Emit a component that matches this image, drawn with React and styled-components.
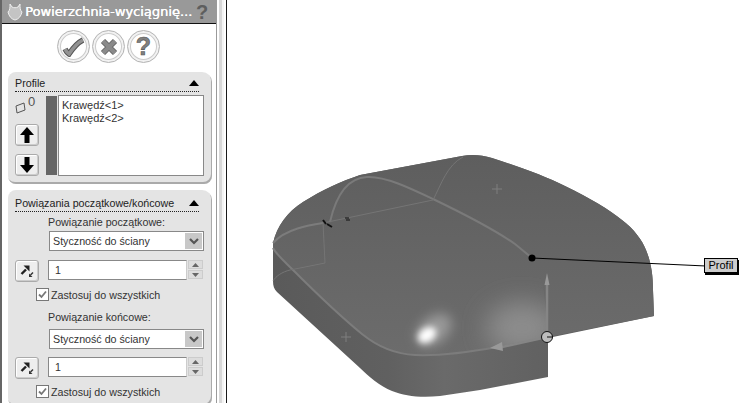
import styled, { createGlobalStyle } from "styled-components";

const GlobalStyle = createGlobalStyle`
  html, body {
    margin: 0;
    background: #fff;
  }
`;

const BODY =
  "M273 243 C277 226 287 212 303 202 C322 190 342 181 360 175 L462 156 C472 154 482 155 492 158 C520 167 545 176 565 186 C590 198 610 210 622 220 C634 229 642 240 646 250 C651 262 653 275 653 290 L654 316 L548 338 L548 377 L480 390 L440 396 C420 398 405 396 392 391 C380 386 368 376 360 368 L277 292 C274 289 273 286 273 281 Z";
const DOME =
  "M273 243 C277 226 287 212 303 202 C322 190 342 181 360 175 L462 156 C472 154 482 155 492 158 C520 167 545 176 565 186 C590 198 610 210 622 220 C634 229 642 240 646 250 C651 262 653 275 653 290 L654 316 L548 337 L497 347 C470 352 440 356 415 355 C395 354 378 347 362 334 C340 316 315 292 292 269 C284 261 276 254 273 248 Z";
// corner patch of the dome, left of the edge that runs down to the triad
const CORNER =
  "M273 243 L532 258 C540 270 546 285 547 337 L497 347 C470 352 440 356 415 355 C395 354 378 347 362 334 C340 316 315 292 292 269 Z";

const Part = ({ title, children, ...rest }) => (
  <Group {...rest}>
    <GroupHead>
      <span>{title}</span>
      <Collapse />
    </GroupHead>
    {children}
  </Group>
);

const LinkBlock = ({ label, $second }) => (
  <>
    <FieldLabel $second={$second}>{label}</FieldLabel>
    <SelectBox $second={$second}>
      <span>Styczność do ściany</span>
      <SelectArrow>
        <svg width="10" height="7" viewBox="0 0 10 7">
          <path d="M1 1 L5 5 L9 1" fill="none" stroke="#555" strokeWidth="2.2" />
        </svg>
      </SelectArrow>
    </SelectBox>
    <ValueRow $second={$second}>
      <ToolButton>
        <svg width="16" height="16" viewBox="0 0 16 16">
          <path d="M2.5 11 L7 6.5" fill="none" stroke="#222" strokeWidth="2.4" />
          <path d="M4.5 2.5 H10.5 V8.5 Z" fill="#222" />
          <path d="M14 9.5 L11.5 12" fill="none" stroke="#333" strokeWidth="1.4" />
          <path d="M10 10.5 V14 H13.5 Z" fill="#333" />
        </svg>
      </ToolButton>
      <ValueInput>1</ValueInput>
      <Spin>
        <SpinPart>
          <svg width="7" height="4" viewBox="0 0 7 4"><path d="M0 4 L3.5 0 L7 4 Z" fill="#666" /></svg>
        </SpinPart>
        <SpinPart>
          <svg width="7" height="4" viewBox="0 0 7 4"><path d="M0 0 L3.5 4 L7 0 Z" fill="#666" /></svg>
        </SpinPart>
      </Spin>
    </ValueRow>
    <CheckRow>
      <CheckBox>
        <svg width="11" height="11" viewBox="0 0 11 11">
          <path d="M2 5.5 L4.5 8 L9 2.5" fill="none" stroke="#777" strokeWidth="1.8" />
        </svg>
      </CheckBox>
      Zastosuj do wszystkich
    </CheckRow>
  </>
);

const Model = () => (
  <svg width="520" height="403" viewBox="227 0 520 403">
    <defs>
      <linearGradient id="side" x1="0" x2="1" y1="0" y2="0">
        <stop offset="0" stopColor="#5a5a5a" />
        <stop offset="0.3" stopColor="#606060" />
        <stop offset="0.45" stopColor="#6a6a6a" />
        <stop offset="0.75" stopColor="#606060" />
        <stop offset="1" stopColor="#5c5c5c" />
      </linearGradient>
      <linearGradient id="dome" x1="0" x2="0" y1="0" y2="1">
        <stop offset="0" stopColor="#5e5e5e" />
        <stop offset="0.55" stopColor="#666" />
        <stop offset="1" stopColor="#6c6c6c" />
      </linearGradient>
      <filter id="blur8" x="-100%" y="-100%" width="300%" height="300%"><feGaussianBlur stdDeviation="6" /></filter>
      <filter id="blur3" x="-100%" y="-100%" width="300%" height="300%"><feGaussianBlur stdDeviation="3" /></filter>
      <filter id="blur14" x="-100%" y="-100%" width="300%" height="300%"><feGaussianBlur stdDeviation="12" /></filter>
      <clipPath id="cornerClip"><path d={CORNER} /></clipPath>
    </defs>

    <path d={BODY} fill="url(#side)" />
    <path d={DOME} fill="url(#dome)" />

    <g clipPath="url(#cornerClip)">
      <ellipse cx="522" cy="328" rx="36" ry="26" fill="#8c8c8c" filter="url(#blur14)" />
      <ellipse cx="434" cy="330" rx="20" ry="13" transform="rotate(-40 434 330)" fill="#9a9a9a" filter="url(#blur8)" />
      <ellipse cx="427" cy="335" rx="10" ry="7" transform="rotate(-35 427 335)" fill="#fff" filter="url(#blur3)" />
    </g>

    <path
      d="M273 248 C276 254 284 261 292 269 C315 292 340 316 362 334 C378 347 395 354 415 355 C440 356 470 352 497 347"
      fill="none"
      stroke="#7c7c7c"
      strokeWidth="2"
    />
    <path
      d="M330 222 C335 200 345 178 367 177 C385 176 410 188 433 199 C460 212 495 230 515 244 L532 258"
      fill="none"
      stroke="#7a7a7a"
      strokeWidth="2"
    />
    <path d="M273 243 C285 229 310 225 323 223" fill="none" stroke="#7c7c7c" strokeWidth="2" />
    <path
      d="M323 223 L433 200 C441 185 447 165 463 157 M323 223 L325 263 L290 270 C282 272 276 276 273 281"
      fill="none"
      stroke="#757575"
      strokeWidth="1"
    />

    <g stroke="#7e7e7e" strokeWidth="1" fill="none">
      <path d="M492 189 H502 M497 184 V194" />
      <path d="M341 337 H351 M346 332 V342" />
    </g>

    <path d="M323 220 L326 224 M327 224 L332 227" stroke="#111" strokeWidth="2" fill="none" />
    <path d="M345 218 H349 M346 220 H350" stroke="#111" strokeWidth="1" fill="none" />

    <path d="M547 337 V284" stroke="#858585" strokeWidth="2.5" />
    <path d="M544.5 285 L547 273 L549.5 285 Z" fill="#999" />
    <path d="M547 337 L502 347" stroke="#858585" strokeWidth="2.5" />
    <path d="M502 342 L490 348 L503 351 Z" fill="#999" />
    <circle cx="547" cy="337" r="5.5" fill="#bdbdbd" stroke="#111" strokeWidth="1" />
    <path d="M547 337 H553" stroke="#111" strokeWidth="1" />

    <path d="M532 258 L706 266" stroke="#000" strokeWidth="1.2" />
    <circle cx="532" cy="258" r="3.5" fill="#000" />
  </svg>
);

export default function App() {
  return (
    <Screen>
      <GlobalStyle />
      <Sidebar>
        <Panel>
          <TitleBar>
            <svg width="16" height="18" viewBox="0 0 16 18">
              <path
                d="M3 1 L5 4 C7 5 9 5 11 4 L13 1 C13 5 13 7 15 9 C14 13 12 16 8 17 C4 16 2 13 1 9 C3 7 3 5 3 1 Z"
                fill="#c4c4c4"
                stroke="#eee"
                strokeWidth="1"
              />
            </svg>
            <TitleText>Powierzchnia-wyciągnię...</TitleText>
            <TitleHelp>?</TitleHelp>
          </TitleBar>

          <ActionRow>
            <RoundButton>
              <svg width="24" height="20" viewBox="0 0 24 20">
                <path d="M3 12 C4 14 5 16 7 17 C11 11 15 6 21 3" fill="none" stroke="#555" strokeWidth="5.5" />
                <path d="M3 12 C4 14 5 16 7 17 C11 11 15 6 21 3" fill="none" stroke="#929292" strokeWidth="3.5" />
              </svg>
            </RoundButton>
            <RoundButton>
              <svg width="20" height="20" viewBox="0 0 20 20">
                <path d="M4 4 L16 16 M16 4 L4 16" fill="none" stroke="#666" strokeWidth="6" />
                <path d="M4 4 L16 16 M16 4 L4 16" fill="none" stroke="#8a8a8a" strokeWidth="4" />
              </svg>
            </RoundButton>
            <RoundButton>?</RoundButton>
          </ActionRow>

          <Part title="Profile">
            <ProfileBody>
              <ProfileTools>
                <SelectionMark>
                  <svg width="11" height="12" viewBox="0 0 11 12">
                    <path d="M1 4 L9 1 L10 8 L2 11 Z" fill="none" stroke="#555" strokeWidth="1" />
                  </svg>
                  <Count>0</Count>
                </SelectionMark>
                <ToolButton>
                  <svg width="14" height="16" viewBox="0 0 14 16">
                    <path d="M7 0 L14 8 H9.5 V16 H4.5 V8 H0 Z" fill="#000" />
                  </svg>
                </ToolButton>
                <ToolButton $stacked>
                  <svg width="14" height="16" viewBox="0 0 14 16">
                    <path d="M7 16 L14 8 H9.5 V0 H4.5 V8 H0 Z" fill="#000" />
                  </svg>
                </ToolButton>
              </ProfileTools>
              <ColorBar />
              <ListBox>
                <div>Krawędź&lt;1&gt;</div>
                <div>Krawędź&lt;2&gt;</div>
              </ListBox>
            </ProfileBody>
          </Part>

          <Part title="Powiązania początkowe/końcowe" $spaced>
            <LinkBlock label="Powiązanie początkowe:" />
            <LinkBlock label="Powiązanie końcowe:" $second />
          </Part>
        </Panel>
        <Splitter />
      </Sidebar>

      <Viewport>
        <Model />
        <Callout>Profil</Callout>
      </Viewport>
    </Screen>
  );
}

const Screen = styled.div`
  display: flex;
  width: 747px;
  height: 403px;
  overflow: hidden;
  background: #fff;
  font-family: "Liberation Sans", Arial, sans-serif;
  font-size: 10.7px;
  color: #222;
`;

const Sidebar = styled.div`
  display: flex;
  flex: none;
  width: 227px;
  height: 403px;
  box-sizing: border-box;
  border-left: 2px solid #666;
  border-right: 1px solid #1a1a1a;
`;

const Panel = styled.div`
  width: 214px;
  flex: none;
  background: #fff;
`;

const Splitter = styled.div`
  flex: 1;
  background: linear-gradient(
    to right,
    #9a9a9a 0 1px,
    #fff 1px 3px,
    #d8d8d8 3px 6px,
    #f4f4f4 6px 8px,
    #fff 8px
  );
`;

const TitleBar = styled.div`
  display: flex;
  align-items: center;
  height: 23px;
  padding-left: 5px;
  gap: 2px;
  background: #999;
  border-bottom: 1px solid #111;
`;

const TitleText = styled.div`
  flex: 1;
  font-family: "DejaVu Sans", Verdana, sans-serif;
  font-size: 13px;
  line-height: 20px;
  color: #fff;
  text-shadow: 0.4px 0 0 #fff;
  white-space: nowrap;
`;

const TitleHelp = styled.div`
  width: 20px;
  flex: none;
  font-size: 20px;
  line-height: 22px;
  font-weight: 700;
  color: #5e5e5e;
`;

const ActionRow = styled.div`
  display: flex;
  justify-content: center;
  gap: 2px;
  padding: 6px 0 0 0;
  height: 42px;
  margin-left: -1px;
`;

const RoundButton = styled.button`
  display: flex;
  align-items: center;
  justify-content: center;
  width: 33px;
  height: 33px;
  padding: 0;
  border: 1px solid #b4b4b4;
  border-radius: 50%;
  background: radial-gradient(circle at 45% 40%, #fff 0 60%, #e6e6e6 100%);
  box-shadow: inset 0 0 0 2px #f2f2f2, inset 0 0 0 3px #ccc;
  font: 700 25px "Liberation Sans", Arial, sans-serif;
  color: #808080;
  -webkit-text-stroke: 0.6px #555;
`;

const Group = styled.section`
  width: 204px;
  box-sizing: border-box;
  margin: ${(p) => (p.$spaced ? "6px" : "0")} 0 0 6px;
  padding: ${(p) => (p.$spaced ? "5px" : "3px")} 8px 8px 7px;
  background: #e4e4e4;
  border-radius: 8px 10px 8px 8px;
  box-shadow: inset -1px -2px 0 #aaa;
`;

const GroupHead = styled.div`
  display: flex;
  align-items: center;
  justify-content: space-between;
  height: 15px;
  padding-bottom: 1px;
  margin-right: 5px;
  border-bottom: 1px dotted #222;
  color: #222;
`;

const Collapse = styled.i`
  width: 0;
  height: 0;
  border-left: 5px solid transparent;
  border-right: 5px solid transparent;
  border-bottom: 6px solid #000;
`;

const ProfileBody = styled.div`
  display: flex;
  margin-top: 3px;
  height: 81px;
`;

const ProfileTools = styled.div`
  display: flex;
  flex-direction: column;
  width: 31px;
  flex: none;
`;

const SelectionMark = styled.div`
  display: flex;
  flex: none;
  height: 29px;
  align-items: flex-start;
  padding-top: 2px;
  box-sizing: border-box;
  color: #555;
  svg {
    margin-top: 5px;
  }
`;

const Count = styled.span`
  font-size: 13px;
  line-height: 10px;
  margin-left: 2px;
`;

const ToolButton = styled.button`
  display: flex;
  align-items: center;
  justify-content: center;
  flex: none;
  width: 24px;
  height: 22px;
  padding: 0;
  margin-top: ${(p) => (p.$stacked ? "8px" : "0")};
  border: 1px solid #aaa;
  border-radius: 3px;
  background: #eee;
  box-shadow: inset -1px -1px 0 #ccc, inset 1px 1px 0 #fff;
`;

const ColorBar = styled.div`
  width: 11px;
  margin: 1px 0;
  background: #666;
`;

const ListBox = styled.div`
  flex: 1;
  margin-left: 1px;
  padding: 3px 0 0 3px;
  box-sizing: border-box;
  background: #fff;
  border: 1px solid #888;
  font-size: 11px;
  line-height: 13px;
  color: #333;
`;

const FieldLabel = styled.div`
  margin: ${(p) => (p.$second ? "9px" : "3px")} 0 0 33px;
  height: 14px;
  line-height: 14px;
  color: #333;
`;

const SelectBox = styled.div`
  display: flex;
  align-items: center;
  justify-content: space-between;
  box-sizing: border-box;
  height: 20px;
  margin: ${(p) => (p.$second ? "5px" : "2px")} 0 0 34px;
  padding: 0 1px 0 3px;
  background: #fff;
  border: 1px solid #888;
  color: #333;
`;

const SelectArrow = styled.span`
  display: flex;
  align-items: center;
  justify-content: center;
  width: 17px;
  height: 16px;
  background: #c8c8c8;
`;

const ValueRow = styled.div`
  display: flex;
  align-items: flex-start;
  margin-top: ${(p) => (p.$second ? "8px" : "9px")};
`;

const ValueInput = styled.div`
  box-sizing: border-box;
  width: 139px;
  height: 20px;
  margin-left: 9px;
  padding-left: 6px;
  line-height: 19px;
  background: #fff;
  border: 1px solid #888;
  border-right-color: #ccc;
  color: #333;
`;

const Spin = styled.div`
  display: flex;
  flex-direction: column;
  gap: 1px;
  margin-left: 1px;
`;

const SpinPart = styled.div`
  display: flex;
  align-items: center;
  justify-content: center;
  width: 15px;
  height: 9px;
  background: #ddd;
  border: 1px solid #ccc;
  box-sizing: border-box;
`;

const CheckRow = styled.div`
  display: flex;
  align-items: center;
  gap: 2px;
  margin: 6px 0 0 21px;
  height: 13px;
  color: #333;
`;

const CheckBox = styled.span`
  display: flex;
  align-items: center;
  justify-content: center;
  box-sizing: border-box;
  width: 13px;
  height: 13px;
  background: #fff;
  border: 1px solid #777;
`;

const Viewport = styled.div`
  position: relative;
  flex: 1;
  background: #fff;
  svg {
    display: block;
  }
`;

const Callout = styled.div`
  position: absolute;
  left: 477px;
  top: 258px;
  box-sizing: border-box;
  width: 34px;
  height: 15px;
  text-align: center;
  line-height: 13px;
  font-size: 11px;
  color: #000;
  background: #ccc;
  border: 1px solid #000;
  box-shadow: 1px 2px 0 #000;
`;
